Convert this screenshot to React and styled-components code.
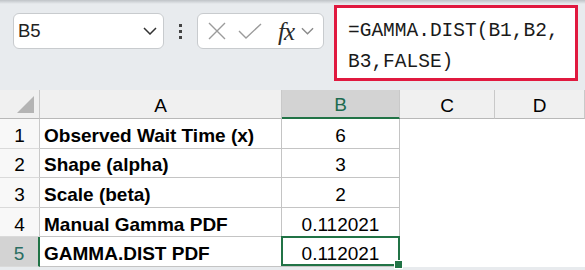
import React from 'react';
import styled, { createGlobalStyle, css } from 'styled-components';

const GREEN = '#217346';
const CELL_LINE = '#c4c4c4';
const HEAD_LINE = '#c9c9c9';

const GlobalStyle = createGlobalStyle`
  html, body {
    margin: 0;
    padding: 0;
    background: #e8ebee;
  }
  body {
    font-family: 'Liberation Sans', Arial, sans-serif;
    overflow: hidden;
  }
`;

const Page = styled.div`
  width: 585px;
  height: 270px;
  overflow: hidden;
  background: #e8ebee;
  display: flex;
  flex-direction: column;
`;

const TopShadow = styled.div`
  height: 4px;
  background: linear-gradient(#bfc3c7, #e8ebee);
`;

const FormulaBar = styled.div`
  height: 86px;
  display: flex;
  align-items: flex-start;
  padding-left: 13px;
`;

const NameBox = styled.div`
  box-sizing: border-box;
  width: 151px;
  height: 36px;
  margin-top: 9px;
  background: #fff;
  border: 1px solid #c8cbce;
  border-radius: 6px;
  display: flex;
  align-items: center;
  justify-content: space-between;
  padding: 0 6px 0 4px;
  font-size: 18.5px;
  color: #222;
`;

const Dots = styled.div`
  width: 33px;
  height: 36px;
  margin-top: 9px;
  display: flex;
  flex-direction: column;
  align-items: center;
  justify-content: center;
  gap: 3px;

  span {
    width: 3px;
    height: 3px;
    background: #444;
  }
`;

const ToolBox = styled.div`
  box-sizing: border-box;
  width: 127px;
  height: 36px;
  margin-top: 9px;
  background: #fff;
  border: 1px solid #c8cbce;
  border-radius: 6px;
  display: flex;
  align-items: center;
  padding-left: 9px;
`;

const IconSlot = styled.div`
  width: ${({ w }) => w}px;
  display: flex;
  justify-content: center;
  align-items: center;
`;

const Fx = styled.span`
  font-family: 'Liberation Serif', 'Times New Roman', serif;
  font-style: italic;
  font-size: 25px;
  line-height: 1;
  color: #2a2a2a;
  letter-spacing: -1px;
`;

const FormulaInput = styled.div`
  box-sizing: border-box;
  width: 244px;
  height: 76px;
  margin-top: 1px;
  margin-left: 10px;
  background: #fff;
  border: 3px solid #e0193f;
  padding: 8px 0 0 11px;
  font-family: 'Liberation Mono', 'Courier New', monospace;
  font-size: 19.5px;
  line-height: 31px;
  color: #1a1a1a;
  white-space: pre;
`;

const Sheet = styled.div`
  display: grid;
  grid-template-columns: 40px 242px 118px 95px 90px;
  grid-template-rows: 29px repeat(5, 29.6px);
  background: #fff;
`;

const Cell = styled.div`
  box-sizing: border-box;
  position: relative;
  display: flex;
  align-items: flex-end;
  justify-content: ${({ align }) => align || 'flex-start'};
  padding: 0 4px 1px;
  font-size: 19px;
  line-height: 1.15;
  color: #000;
  font-weight: ${({ bold }) => (bold ? 700 : 400)};
  border-right: ${({ lined }) => (lined ? `1px solid ${CELL_LINE}` : 'none')};
  border-bottom: ${({ lined }) => (lined ? `1px solid ${CELL_LINE}` : 'none')};
  white-space: nowrap;
`;

const ColHead = styled(Cell)`
  justify-content: center;
  background: #f0f0f0;
  border-right: 1px solid ${HEAD_LINE};
  border-bottom: 1px solid #b8b8b8;
  ${({ active }) =>
    active &&
    css`
      background: #d3d3d3;
      color: #1d6b4f;
      border-bottom: 2px solid ${GREEN};
    `}
`;

const RowHead = styled(Cell)`
  justify-content: center;
  background: #f8f8f8;
  border-right: 1px solid ${HEAD_LINE};
  border-bottom: 1px solid #dadada;
  ${({ active }) =>
    active &&
    css`
      background: #d3d3d3;
      color: #2a6e62;
      border-right: 2px solid ${GREEN};
    `}
`;

const Corner = styled(ColHead)`
  &::after {
    content: '';
    position: absolute;
    right: 5px;
    bottom: 5px;
    width: 0;
    height: 0;
    border-left: 17px solid transparent;
    border-bottom: 17px solid #b4b4b4;
  }
`;

const Selection = styled.div`
  position: absolute;
  left: -1px;
  top: -1px;
  right: -1px;
  bottom: 0;
  border: 2px solid ${GREEN};
  pointer-events: none;

  &::after {
    content: '';
    position: absolute;
    right: -5px;
    bottom: -5px;
    width: 7px;
    height: 7px;
    background: ${GREEN};
    border: 1px solid #fff;
  }
`;

const rows = [
  ['Observed Wait Time (x)', '6'],
  ['Shape (alpha)', '3'],
  ['Scale (beta)', '2'],
  ['Manual Gamma PDF', '0.112021'],
  ['GAMMA.DIST PDF', '0.112021'],
];

const Chevron = ({ color, w = 14 }) => (
  <svg width={w} height="8" viewBox="0 0 14 8">
    <path d="M1 1 L7 7 L13 1" fill="none" stroke={color} strokeWidth="1.5" />
  </svg>
);

const App = () => (
  <Page>
    <GlobalStyle />
    <TopShadow />
    <FormulaBar>
      <NameBox>
        <span>B5</span>
        <Chevron color="#333" />
      </NameBox>
      <Dots>
        <span />
        <span />
        <span />
      </Dots>
      <ToolBox>
        <IconSlot w={20}>
          <svg width="18" height="18" viewBox="0 0 18 18">
            <path d="M1 1 L17 17 M17 1 L1 17" stroke="#9b9b9b" strokeWidth="1.4" />
          </svg>
        </IconSlot>
        <IconSlot w={46}>
          <svg width="24" height="16" viewBox="0 0 24 16">
            <path d="M1 8 L8 15 L23 1" fill="none" stroke="#9b9b9b" strokeWidth="1.4" />
          </svg>
        </IconSlot>
        <IconSlot w={26}>
          <Fx>fx</Fx>
        </IconSlot>
        <IconSlot w={17}>
          <Chevron color="#8a8a8a" w={13} />
        </IconSlot>
      </ToolBox>
      <FormulaInput>{'=GAMMA.DIST(B1,B2,\nB3,FALSE)'}</FormulaInput>
    </FormulaBar>
    <Sheet>
      <Corner />
      <ColHead>A</ColHead>
      <ColHead active>B</ColHead>
      <ColHead>C</ColHead>
      <ColHead>D</ColHead>
      {rows.map(([label, value], i) => {
        const last = i === rows.length - 1;
        return (
          <React.Fragment key={label}>
            <RowHead active={last}>{i + 1}</RowHead>
            <Cell bold lined>
              {label}
            </Cell>
            <Cell lined align="center">
              {value}
              {last && <Selection />}
            </Cell>
            <Cell />
            <Cell />
          </React.Fragment>
        );
      })}
    </Sheet>
  </Page>
);

export default App;
